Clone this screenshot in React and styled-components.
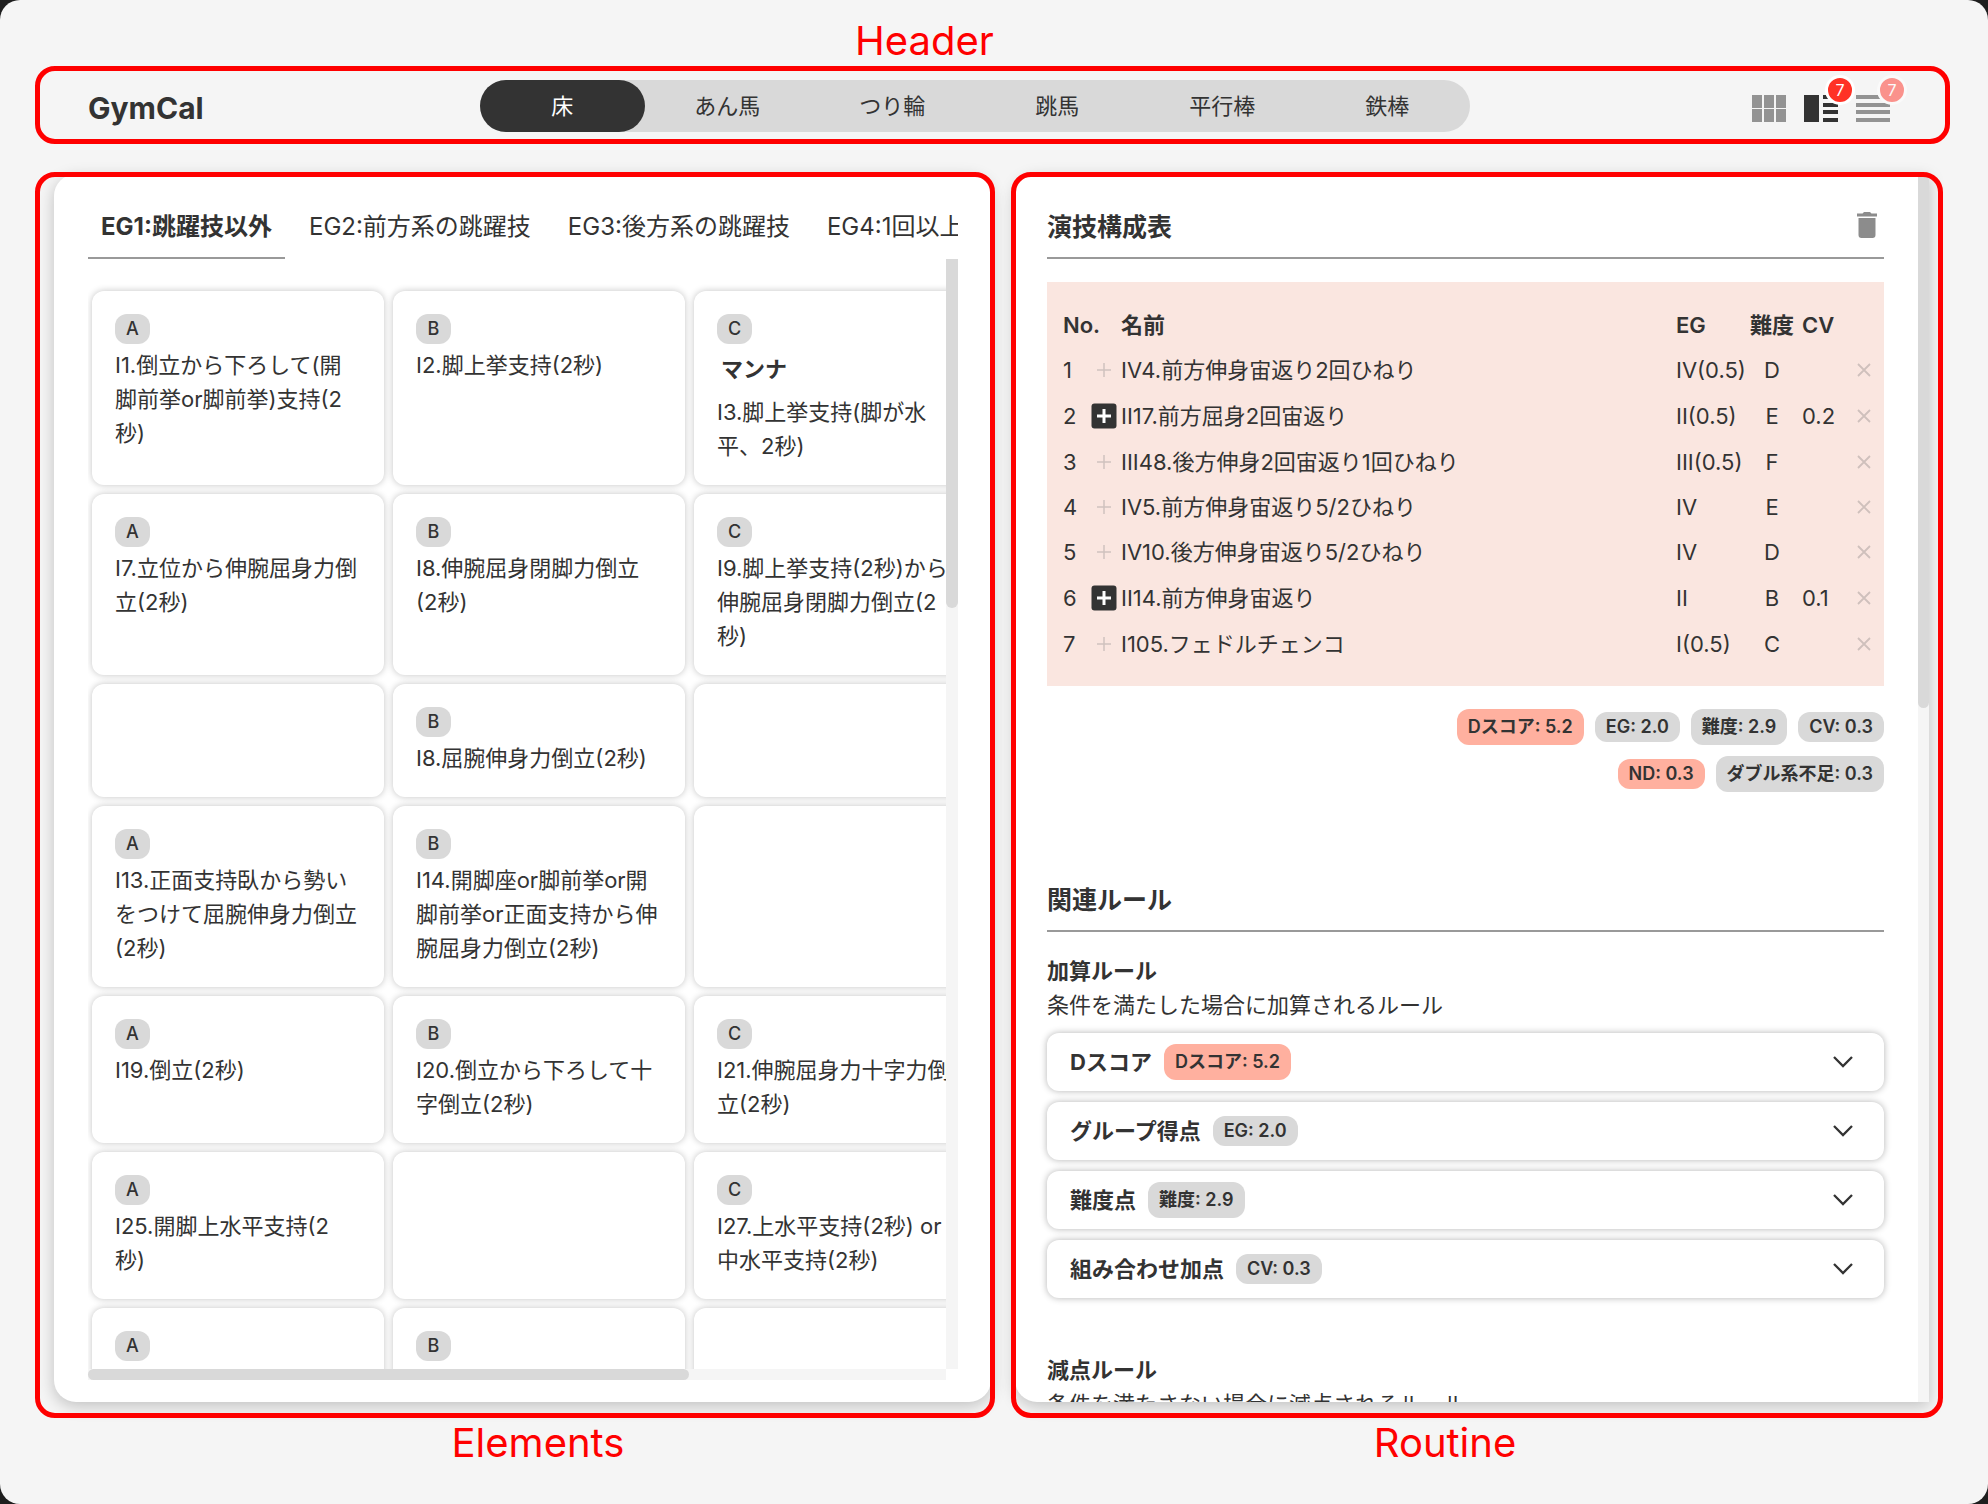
import React, { useState } from "react";
import styled, { createGlobalStyle, css } from "styled-components";

const ink = "#333333";
const muted = "#999999";
const chipGrey = "#d9d9d9";
const canvas = "#f5f5f5";
const accent = "#ffb09f";
const outline = "#ff0000";

const GlobalStyle = createGlobalStyle`
  *, *::before, *::after { box-sizing: border-box; }
  html { background: #1e1e1e; }
  body {
    margin: 0;
    color: ${ink};
    font-family: Inter, "Noto Sans CJK JP", sans-serif;
    font-size: 22px;
    line-height: 34px;
  }
  button { font: inherit; color: inherit; border: 0; padding: 0; background: none; cursor: pointer; }
  h1, h2, h3, p { margin: 0; }
`;

const Page = styled.div`
  height: 100vh;
  display: flex;
  flex-direction: column;
  padding: 0 38px 0 35px;
  background: ${canvas};
  border-radius: 20px;
  overflow: hidden;
`;

const RegionLabel = styled.div`
  color: ${outline};
  font-size: 40px;
  line-height: 48px;
  text-align: center;
`;

const TopLabel = styled(RegionLabel)`
  padding: 17px 136px 1px 0;
`;

const ElementsLabel = styled(RegionLabel)`
  padding-left: 46px;
`;

const RoutineLabel = styled(RegionLabel)`
  padding-right: 64px;
`;

const Outlined = styled.div`
  position: relative;
  min-width: 0;
  min-height: 0;
  &::after {
    content: "";
    position: absolute;
    inset: 0;
    border: 5px solid ${outline};
    border-radius: 20px;
    pointer-events: none;
  }
`;

const HeaderBar = styled(Outlined).attrs({ as: "header" })`
  display: flex;
  align-items: center;
  justify-content: space-between;
  height: 78px;
  padding: 2px 60px 0 53px;
`;

const Brand = styled.h1`
  font-size: 30px;
  font-weight: 700;
  padding-top: 3px;
`;

const Segments = styled.nav`
  display: flex;
  height: 52px;
  border-radius: 26px;
  background: ${chipGrey};
`;

const Segment = styled.button`
  width: 165px;
  border-radius: 26px;
  ${(p) => p.$active && css`
    background: ${ink};
    color: #ffffff;
  `}
`;

const Views = styled.div`
  display: flex;
  gap: 18px;
  padding: 4px 0 0 6px;
`;

const ViewButton = styled.button`
  position: relative;
  width: 34px;
  height: 27px;
  opacity: ${(p) => (p.$active ? 1 : 0.5)};
  svg { display: block; }
`;

const Count = styled.span`
  position: absolute;
  top: -20px;
  right: -17px;
  width: 30px;
  height: 30px;
  border: 3px solid #ffffff;
  border-radius: 50%;
  background: #ff3226;
  color: #ffffff;
  font-size: 16px;
  line-height: 24px;
  text-align: center;
`;

const Main = styled.main`
  flex: 1;
  min-height: 0;
  display: grid;
  grid-template-columns: 960fr 932fr;
  gap: 16px;
  padding: 28px 7px 0 0;
`;

const Panel = styled.section`
  height: 100%;
  border-radius: 22px;
  background: #ffffff;
  box-shadow: 0 4px 16px rgba(0, 0, 0, 0.22);
  overflow: hidden;
`;

const ElementsRegion = styled(Outlined)`
  padding: 2px 4px 16px 19px;
`;

const RoutineRegion = styled(Outlined)`
  padding: 2px 14px 16px 4px;
`;

const ElementsPanel = styled(Panel)`
  display: flex;
  flex-direction: column;
  padding: 18px 33px 22px 34px;
`;

const GroupTabs = styled.div`
  display: flex;
  gap: 11px;
  overflow: hidden;
  flex: none;
`;

const GroupTab = styled.button`
  flex: none;
  height: 67px;
  padding: 4px 13px 0;
  font-size: 24px;
  white-space: nowrap;
  border-bottom: 2px solid ${(p) => (p.$active ? muted : "transparent")};
  font-weight: ${(p) => (p.$active ? 700 : 400)};
`;

const Scroller = styled.div`
  flex: 1;
  min-height: 0;
  display: grid;
  grid-template: minmax(0, 1fr) 11px / minmax(0, 1fr) 12px;
`;

const CardViewport = styled.div`
  overflow: auto;
  scrollbar-width: none;
  padding: 32px 4px 4px;
`;

const Track = styled.div`
  background: ${canvas};
`;

const Thumb = styled.div`
  background: ${chipGrey};
  border-radius: ${(p) => (p.$vertical ? "0 0 6px 6px" : "6px")};
  width: ${(p) => (p.$vertical ? "100%" : p.$size)};
  height: ${(p) => (p.$vertical ? p.$size : "100%")};
`;

const CardGrid = styled.div`
  display: grid;
  grid-template-columns: repeat(3, 292px);
  gap: 9px;
`;

const Card = styled.article`
  min-height: 113px;
  padding: 23px 26px 22px 23px;
  border-radius: 12px;
  background: #ffffff;
  box-shadow: 0 0 7px rgba(0, 0, 0, 0.24);
`;

const Grade = styled.div`
  width: 35px;
  height: 30px;
  margin-bottom: 4px;
  border-radius: 12px;
  background: ${chipGrey};
  font-size: 18px;
  font-weight: 500;
  line-height: 30px;
  text-align: center;
`;

const Alias = styled.h3`
  padding: 4px 4px 9px;
  font-size: 22px;
  font-weight: 700;
`;

const RoutinePanel = styled(Panel)`
  display: grid;
  grid-template-columns: minmax(0, 1fr) 11px;
  border-radius: 22px 0 0 22px;
`;

const RoutineContent = styled.div`
  overflow: auto;
  scrollbar-width: none;
  padding: 18px 34px 0 32px;
`;

const SectionHead = styled.div`
  display: flex;
  align-items: center;
  justify-content: space-between;
  height: 67px;
  padding-right: 7px;
  border-bottom: 2px solid ${muted};
`;

const SectionTitle = styled.h2`
  padding-top: 5px;
  font-size: 25px;
  font-weight: 700;
`;

const TableBox = styled.div`
  margin-top: 23px;
  padding: 21px 6px 20px 16px;
  background: #fae6e0;
`;

const Table = styled.table`
  width: 100%;
  table-layout: fixed;
  border-collapse: collapse;
`;

const Col = styled.col`
  width: ${(p) => p.$w};
`;

const Th = styled.th`
  height: 44px;
  padding: 0;
  text-align: left;
  font-weight: 600;
  white-space: nowrap;
`;

const Row = styled.tr`
  height: ${(p) => (p.$linked ? "47px" : "45px")};
`;

const Td = styled.td`
  padding: 0;
  white-space: nowrap;
`;

const GradeTd = styled(Td)`
  padding-right: 8px;
  text-align: center;
`;

const IconButton = styled.button`
  display: block;
  line-height: 0;
  margin: ${(p) => (p.$center ? "0 auto" : "0")};
`;

const Chips = styled.div`
  display: flex;
  flex-wrap: wrap;
  justify-content: flex-end;
  align-items: center;
  gap: 11px;
  width: 460px;
  margin: 23px 0 0 auto;
`;

const Chip = styled.span`
  padding: 0 11px;
  border-radius: 12px;
  background: ${(p) => (p.$accent ? accent : chipGrey)};
  font-size: 18px;
  font-weight: 600;
  line-height: ${(p) => (p.$tall ? "36px" : "30px")};
  white-space: nowrap;
`;

const RulesSection = styled.section`
  margin-top: 73px;
`;

const RuleGroup = styled.section`
  margin-top: ${(p) => (p.$first ? "22px" : "55px")};
`;

const RuleTitle = styled.h3`
  font-size: 22px;
  font-weight: 700;
`;

const RuleList = styled.div`
  display: grid;
  gap: 11px;
  margin-top: 11px;
`;

const Rule = styled.button`
  display: flex;
  align-items: center;
  gap: 12px;
  height: 58px;
  padding: 0 31px 0 23px;
  border-radius: 12px;
  background: #ffffff;
  box-shadow: 0 0 7px rgba(0, 0, 0, 0.3);
  font-weight: 700;
  svg { margin-left: auto; }
`;

const BottomLabels = styled.footer`
  display: grid;
  grid-template-columns: 960fr 932fr;
  gap: 16px;
  padding: 1px 7px 37px 0;
`;

const GridIcon = () => (
  <svg width="34" height="27" viewBox="0 0 34 27" fill={ink} aria-hidden="true">
    <path d="M0 0h10v13H0zM12 0h10v13H12zM24 0h10v13H24zM0 14h10v13H0zM12 14h10v13H12zM24 14h10v13H24z" />
  </svg>
);

const SplitIcon = () => (
  <svg width="34" height="27" viewBox="0 0 34 27" fill={ink} aria-hidden="true">
    <path d="M0 0h15v27H0zM19 0h15v4H19zM19 8h15v4H19zM19 15h15v4H19zM19 23h15v4H19z" />
  </svg>
);

const ListIcon = () => (
  <svg width="34" height="27" viewBox="0 0 34 27" fill={ink} aria-hidden="true">
    <path d="M0 0h34v4H0zM0 8h34v4H0zM0 15h34v4H0zM0 23h34v4H0z" />
  </svg>
);

const TrashIcon = () => (
  <svg width="20" height="26" viewBox="0 0 20 26" fill="#8c8c8c" aria-hidden="true">
    <path d="M1.5 6h17v17a3 3 0 0 1-3 3h-11a3 3 0 0 1-3-3zM0 1.500H5.500L7 0h6l1.500 1.500H20V4.500H0z" />
  </svg>
);

const PlusIcon = ({ on }) => (
  <svg width="26" height="26" viewBox="0 0 26 26" aria-hidden="true">
    {on && <rect x="0.500" y="0.500" width="25" height="25" rx="3" fill={ink} />}
    <path d="M13 6v14M6 13h14" stroke={on ? "#ffffff" : "#d0c2be"} strokeWidth={on ? 3 : 1.5} />
  </svg>
);

const CrossIcon = () => (
  <svg width="14" height="14" viewBox="0 0 14 14" stroke="#cfc0bc" strokeWidth="1.800" aria-hidden="true">
    <path d="M1 1l12 12M13 1L1 13" />
  </svg>
);

const ChevronIcon = () => (
  <svg width="20" height="12" viewBox="0 0 20 12" fill="none" stroke={ink} strokeWidth="2.300" aria-hidden="true">
    <path d="M1 1l9 9 9-9" />
  </svg>
);

const apparatus = ["床", "あん馬", "つり輪", "跳馬", "平行棒", "鉄棒"];
const groups = ["EG1:跳躍技以外", "EG2:前方系の跳躍技", "EG3:後方系の跳躍技", "EG4:1回以上"];

const cards = [
  { grade: "A", text: "I1.倒立から下ろして(開脚前挙or脚前挙)支持(2秒)" },
  { grade: "B", text: "I2.脚上挙支持(2秒)" },
  { grade: "C", alias: "マンナ", text: "I3.脚上挙支持(脚が水平、2秒)" },
  { grade: "A", text: "I7.立位から伸腕屈身力倒立(2秒)" },
  { grade: "B", text: "I8.伸腕屈身閉脚力倒立(2秒)" },
  { grade: "C", text: "I9.脚上挙支持(2秒)から伸腕屈身閉脚力倒立(2秒)" },
  null,
  { grade: "B", text: "I8.屈腕伸身力倒立(2秒)" },
  null,
  { grade: "A", text: "I13.正面支持臥から勢いをつけて屈腕伸身力倒立(2秒)" },
  { grade: "B", text: "I14.開脚座or脚前挙or開脚前挙or正面支持から伸腕屈身力倒立(2秒)" },
  null,
  { grade: "A", text: "I19.倒立(2秒)" },
  { grade: "B", text: "I20.倒立から下ろして十字倒立(2秒)" },
  { grade: "C", text: "I21.伸腕屈身力十字力倒立(2秒)" },
  { grade: "A", text: "I25.開脚上水平支持(2秒)" },
  null,
  { grade: "C", text: "I27.上水平支持(2秒) or 中水平支持(2秒)" },
  { grade: "A" },
  { grade: "B" },
  null,
];

const routine = [
  { name: "IV4.前方伸身宙返り2回ひねり", eg: "IV(0.5)", grade: "D" },
  { name: "II17.前方屈身2回宙返り", eg: "II(0.5)", grade: "E", cv: "0.2" },
  { name: "III48.後方伸身2回宙返り1回ひねり", eg: "III(0.5)", grade: "F" },
  { name: "IV5.前方伸身宙返り5/2ひねり", eg: "IV", grade: "E" },
  { name: "IV10.後方伸身宙返り5/2ひねり", eg: "IV", grade: "D" },
  { name: "II14.前方伸身宙返り", eg: "II", grade: "B", cv: "0.1" },
  { name: "I105.フェドルチェンコ", eg: "I(0.5)", grade: "C" },
];

const scores = [
  { text: "Dスコア: 5.2", accent: true, tall: true },
  { text: "EG: 2.0" },
  { text: "難度: 2.9", tall: true },
  { text: "CV: 0.3" },
  { text: "ND: 0.3", accent: true },
  { text: "ダブル系不足: 0.3", tall: true },
];

const rules = [
  { name: "Dスコア", score: scores[0] },
  { name: "グループ得点", score: scores[1] },
  { name: "難度点", score: scores[2] },
  { name: "組み合わせ加点", score: scores[3] },
];

const ScoreChip = ({ score }) => (
  <Chip $accent={score.accent} $tall={score.tall}>{score.text}</Chip>
);

export default function App() {
  const [event, setEvent] = useState(0);
  const [group, setGroup] = useState(0);
  const [view, setView] = useState(1);

  return (
    <>
      <GlobalStyle />
      <Page>
        <TopLabel>Header</TopLabel>
        <HeaderBar>
          <Brand>GymCal</Brand>
          <Segments>
            {apparatus.map((name, i) => (
              <Segment key={name} $active={i === event} onClick={() => setEvent(i)}>{name}</Segment>
            ))}
          </Segments>
          <Views>
            <ViewButton $active={view === 0} onClick={() => setView(0)} aria-label="Elements">
              <GridIcon />
            </ViewButton>
            <ViewButton $active={view === 1} onClick={() => setView(1)} aria-label="Elements and routine">
              <SplitIcon />
              <Count>7</Count>
            </ViewButton>
            <ViewButton $active={view === 2} onClick={() => setView(2)} aria-label="Routine">
              <ListIcon />
              <Count>7</Count>
            </ViewButton>
          </Views>
        </HeaderBar>

        <Main>
          <ElementsRegion>
            <ElementsPanel>
              <GroupTabs>
                {groups.map((name, i) => (
                  <GroupTab key={name} $active={i === group} onClick={() => setGroup(i)}>{name}</GroupTab>
                ))}
              </GroupTabs>
              <Scroller>
                <CardViewport>
                  <CardGrid>
                    {cards.map((card, i) => (
                      <Card key={i}>
                        {card && <Grade>{card.grade}</Grade>}
                        {card?.alias && <Alias>{card.alias}</Alias>}
                        {card?.text && <p>{card.text}</p>}
                      </Card>
                    ))}
                  </CardGrid>
                </CardViewport>
                <Track><Thumb $vertical $size="31.4%" /></Track>
                <Track><Thumb $size="70%" /></Track>
              </Scroller>
            </ElementsPanel>
          </ElementsRegion>

          <RoutineRegion>
            <RoutinePanel>
              <RoutineContent>
                <SectionHead>
                  <SectionTitle>演技構成表</SectionTitle>
                  <IconButton aria-label="Clear routine"><TrashIcon /></IconButton>
                </SectionHead>
                <TableBox>
                  <Table>
                    <colgroup>
                      <Col $w="28px" />
                      <Col $w="30px" />
                      <Col />
                      <Col $w="74px" />
                      <Col $w="52px" />
                      <Col $w="48px" />
                      <Col $w="28px" />
                    </colgroup>
                    <thead>
                      <tr>
                        <Th colSpan={2}>No.</Th>
                        <Th>名前</Th>
                        <Th>EG</Th>
                        <Th>難度</Th>
                        <Th>CV</Th>
                        <Th />
                      </tr>
                    </thead>
                    <tbody>
                      {routine.map((row, i) => (
                        <Row key={row.name} $linked={Boolean(row.cv)}>
                          <Td>{i + 1}</Td>
                          <Td><IconButton aria-label="Connect"><PlusIcon on={Boolean(row.cv)} /></IconButton></Td>
                          <Td>{row.name}</Td>
                          <Td>{row.eg}</Td>
                          <GradeTd>{row.grade}</GradeTd>
                          <Td>{row.cv}</Td>
                          <Td><IconButton $center aria-label="Remove"><CrossIcon /></IconButton></Td>
                        </Row>
                      ))}
                    </tbody>
                  </Table>
                </TableBox>
                <Chips>
                  {scores.map((score) => <ScoreChip key={score.text} score={score} />)}
                </Chips>
                <RulesSection>
                  <SectionHead>
                    <SectionTitle>関連ルール</SectionTitle>
                  </SectionHead>
                  <RuleGroup $first>
                    <RuleTitle>加算ルール</RuleTitle>
                    <p>条件を満たした場合に加算されるルール</p>
                    <RuleList>
                      {rules.map((rule) => (
                        <Rule key={rule.name}>
                          {rule.name}
                          <ScoreChip score={rule.score} />
                          <ChevronIcon />
                        </Rule>
                      ))}
                    </RuleList>
                  </RuleGroup>
                  <RuleGroup>
                    <RuleTitle>減点ルール</RuleTitle>
                    <p>条件を満たさない場合に減点されるルール</p>
                  </RuleGroup>
                </RulesSection>
              </RoutineContent>
              <Track><Thumb $vertical $size="43.5%" /></Track>
            </RoutinePanel>
          </RoutineRegion>
        </Main>

        <BottomLabels>
          <ElementsLabel>Elements</ElementsLabel>
          <RoutineLabel>Routine</RoutineLabel>
        </BottomLabels>
      </Page>
    </>
  );
}
